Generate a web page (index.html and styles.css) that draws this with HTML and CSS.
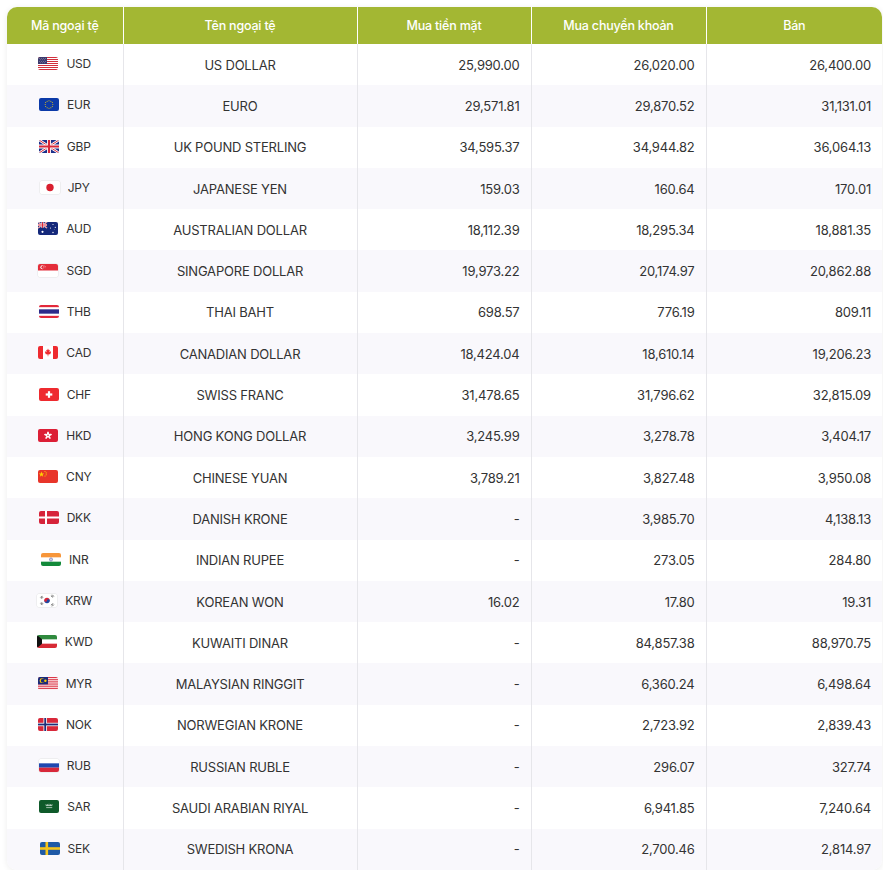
FILE: index.html
```html
<!DOCTYPE html>
<html lang="vi">
<head>
<meta charset="utf-8">
<title>Tỷ giá ngoại tệ</title>
<link rel="stylesheet" href="styles.css">
</head>
<body>
<div class="wrap">
<table class="rates">
<colgroup>
<col class="c1"><col class="c2"><col class="c3"><col class="c4"><col class="c5">
</colgroup>
<thead>
<tr><th>Mã ngoại tệ</th><th>Tên ngoại tệ</th><th>Mua tiền mặt</th><th>Mua chuyển khoản</th><th>Bán</th></tr>
</thead>
<tbody>
<tr><td class="code"><span class="cc"><span class="flag"><svg viewBox="0 0 20 13"><rect width="20" height="13" fill="#fff"/><g fill="#d22f3c"><rect y="0" width="20" height="1"/><rect y="2" width="20" height="1"/><rect y="4" width="20" height="1"/><rect y="6" width="20" height="1"/><rect y="8" width="20" height="1"/><rect y="10" width="20" height="1"/><rect y="12" width="20" height="1"/></g><rect width="9" height="7" fill="#3c3b6e"/><g fill="#fff" opacity=".8"><circle cx="1.5" cy="1.3" r=".35"/><circle cx="3.5" cy="1.3" r=".35"/><circle cx="5.5" cy="1.3" r=".35"/><circle cx="7.5" cy="1.3" r=".35"/><circle cx="2.5" cy="2.8" r=".35"/><circle cx="4.5" cy="2.8" r=".35"/><circle cx="6.5" cy="2.8" r=".35"/><circle cx="1.5" cy="4.3" r=".35"/><circle cx="3.5" cy="4.3" r=".35"/><circle cx="5.5" cy="4.3" r=".35"/><circle cx="7.5" cy="4.3" r=".35"/><circle cx="2.5" cy="5.8" r=".35"/><circle cx="4.5" cy="5.8" r=".35"/><circle cx="6.5" cy="5.8" r=".35"/></g></svg></span>USD</span></td><td class="name">US DOLLAR</td><td class="num">25,990.00</td><td class="num">26,020.00</td><td class="num">26,400.00</td></tr>
<tr><td class="code"><span class="cc"><span class="flag"><svg viewBox="0 0 20 13"><rect width="20" height="13" fill="#0b3aa8"/><g fill="#ffd200"><circle cx="10" cy="2.7" r=".5"/><circle cx="11.9" cy="3.2" r=".5"/><circle cx="13.3" cy="4.6" r=".5"/><circle cx="13.8" cy="6.5" r=".5"/><circle cx="13.3" cy="8.4" r=".5"/><circle cx="11.9" cy="9.8" r=".5"/><circle cx="10" cy="10.3" r=".5"/><circle cx="8.1" cy="9.8" r=".5"/><circle cx="6.7" cy="8.4" r=".5"/><circle cx="6.2" cy="6.5" r=".5"/><circle cx="6.7" cy="4.6" r=".5"/><circle cx="8.1" cy="3.2" r=".5"/></g></svg></span>EUR</span></td><td class="name">EURO</td><td class="num">29,571.81</td><td class="num">29,870.52</td><td class="num">31,131.01</td></tr>
<tr><td class="code"><span class="cc"><span class="flag"><svg viewBox="0 0 20 13"><rect width="20" height="13" fill="#1b2f8a"/><path d="M0 0L20 13M20 0L0 13" stroke="#fff" stroke-width="2.6"/><path d="M0 0L20 13M20 0L0 13" stroke="#d8283a" stroke-width="1"/><path d="M10 0V13M0 6.5H20" stroke="#fff" stroke-width="4"/><path d="M10 0V13M0 6.5H20" stroke="#d8283a" stroke-width="2.2"/></svg></span>GBP</span></td><td class="name">UK POUND STERLING</td><td class="num">34,595.37</td><td class="num">34,944.82</td><td class="num">36,064.13</td></tr>
<tr><td class="code"><span class="cc"><span class="flag light"><svg viewBox="0 0 20 13"><rect width="20" height="13" fill="#fff"/><circle cx="10" cy="6.5" r="3.7" fill="#d9202f"/></svg></span>JPY</span></td><td class="name">JAPANESE YEN</td><td class="num">159.03</td><td class="num">160.64</td><td class="num">170.01</td></tr>
<tr><td class="code"><span class="cc"><span class="flag"><svg viewBox="0 0 20 13"><rect width="20" height="13" fill="#14287a"/><path d="M0 0L9 6M9 0L0 6" stroke="#fff" stroke-width="1.4"/><path d="M0 0L9 6M9 0L0 6" stroke="#d8283a" stroke-width=".6"/><path d="M4.5 0V6M0 3H9" stroke="#fff" stroke-width="2"/><path d="M4.5 0V6M0 3H9" stroke="#d8283a" stroke-width="1"/><g fill="#fff"><circle cx="4.5" cy="9.8" r="1.1"/><circle cx="15" cy="2.5" r=".6"/><circle cx="12.5" cy="6" r=".6"/><circle cx="17.3" cy="5.3" r=".6"/><circle cx="15" cy="10.5" r=".7"/><circle cx="16.2" cy="7.5" r=".35"/></g></svg></span>AUD</span></td><td class="name">AUSTRALIAN DOLLAR</td><td class="num">18,112.39</td><td class="num">18,295.34</td><td class="num">18,881.35</td></tr>
<tr><td class="code"><span class="cc"><span class="flag light"><svg viewBox="0 0 20 13"><rect width="20" height="13" fill="#fff"/><rect width="20" height="6.5" fill="#e42d3a"/><circle cx="4.4" cy="3.25" r="2" fill="#fff"/><circle cx="5.2" cy="3.25" r="1.8" fill="#e42d3a"/><g fill="#fff"><circle cx="6.3" cy="1.9" r=".35"/><circle cx="7.3" cy="2.6" r=".35"/><circle cx="7" cy="3.8" r=".35"/><circle cx="5.7" cy="3.8" r=".35"/><circle cx="5.4" cy="2.6" r=".35"/></g></svg></span>SGD</span></td><td class="name">SINGAPORE DOLLAR</td><td class="num">19,973.22</td><td class="num">20,174.97</td><td class="num">20,862.88</td></tr>
<tr><td class="code"><span class="cc"><span class="flag"><svg viewBox="0 0 20 13"><rect width="20" height="13" fill="#e3283a"/><rect y="2.17" width="20" height="8.66" fill="#fff"/><rect y="4.33" width="20" height="4.34" fill="#2d2a8a"/></svg></span>THB</span></td><td class="name">THAI BAHT</td><td class="num">698.57</td><td class="num">776.19</td><td class="num">809.11</td></tr>
<tr><td class="code"><span class="cc"><span class="flag"><svg viewBox="0 0 20 13"><rect width="20" height="13" fill="#fff"/><rect width="5" height="13" fill="#ee2a2f"/><rect x="15" width="5" height="13" fill="#ee2a2f"/><path d="M10 2.6L10.8 4.2L11.8 3.8L11.4 6.2L12.8 5.2L13.2 6.1L12.3 7.4L12.8 8L10.3 8.4L10.3 10.2H9.7L9.7 8.4L7.2 8L7.7 7.4L6.8 6.1L7.2 5.2L8.6 6.2L8.2 3.8L9.2 4.2Z" fill="#ee2a2f"/></svg></span>CAD</span></td><td class="name">CANADIAN DOLLAR</td><td class="num">18,424.04</td><td class="num">18,610.14</td><td class="num">19,206.23</td></tr>
<tr><td class="code"><span class="cc"><span class="flag"><svg viewBox="0 0 20 13"><rect width="20" height="13" fill="#ee2a2f"/><rect x="8.9" y="3.2" width="2.2" height="6.6" fill="#fff"/><rect x="6.7" y="5.4" width="6.6" height="2.2" fill="#fff"/></svg></span>CHF</span></td><td class="name">SWISS FRANC</td><td class="num">31,478.65</td><td class="num">31,796.62</td><td class="num">32,815.09</td></tr>
<tr><td class="code"><span class="cc"><span class="flag"><svg viewBox="0 0 20 13"><rect width="20" height="13" fill="#dc1f36"/><g fill="#fff"><ellipse cx="10" cy="4.3" rx="1" ry="1.9"/><ellipse cx="10" cy="4.3" rx="1" ry="1.9" transform="rotate(72 10 6.5)"/><ellipse cx="10" cy="4.3" rx="1" ry="1.9" transform="rotate(144 10 6.5)"/><ellipse cx="10" cy="4.3" rx="1" ry="1.9" transform="rotate(216 10 6.5)"/><ellipse cx="10" cy="4.3" rx="1" ry="1.9" transform="rotate(288 10 6.5)"/></g><circle cx="10" cy="6.5" r=".6" fill="#dc1f36"/></svg></span>HKD</span></td><td class="name">HONG KONG DOLLAR</td><td class="num">3,245.99</td><td class="num">3,278.78</td><td class="num">3,404.17</td></tr>
<tr><td class="code"><span class="cc"><span class="flag"><svg viewBox="0 0 20 13"><rect width="20" height="13" fill="#e8352a"/><path d="M3.5 1.4L4.2 3.4L6.3 3.4L4.6 4.7L5.2 6.7L3.5 5.5L1.8 6.7L2.4 4.7L0.7 3.4L2.8 3.4Z" fill="#ffd400"/><g fill="#ffd400"><circle cx="7" cy="1.5" r=".55"/><circle cx="8.2" cy="2.9" r=".55"/><circle cx="8.2" cy="4.7" r=".55"/><circle cx="7" cy="6" r=".55"/></g></svg></span>CNY</span></td><td class="name">CHINESE YUAN</td><td class="num">3,789.21</td><td class="num">3,827.48</td><td class="num">3,950.08</td></tr>
<tr><td class="code"><span class="cc"><span class="flag"><svg viewBox="0 0 20 13"><rect width="20" height="13" fill="#d6243a"/><rect x="6" width="2" height="13" fill="#fff"/><rect y="5.5" width="20" height="2" fill="#fff"/></svg></span>DKK</span></td><td class="name">DANISH KRONE</td><td class="num">-</td><td class="num">3,985.70</td><td class="num">4,138.13</td></tr>
<tr><td class="code"><span class="cc"><span class="flag"><svg viewBox="0 0 20 13"><rect width="20" height="13" fill="#fff"/><rect width="20" height="4.33" fill="#f7963a"/><rect y="8.67" width="20" height="4.33" fill="#138a3a"/><circle cx="10" cy="6.5" r="1.5" fill="none" stroke="#1c2b8a" stroke-width=".5"/><circle cx="10" cy="6.5" r=".4" fill="#1c2b8a"/></svg></span>INR</span></td><td class="name">INDIAN RUPEE</td><td class="num">-</td><td class="num">273.05</td><td class="num">284.80</td></tr>
<tr><td class="code"><span class="cc"><span class="flag light"><svg viewBox="0 0 20 13"><rect width="20" height="13" fill="#fff"/><path d="M7.3 6.5A2.7 2.7 0 0 1 12.7 6.5Z" fill="#d6263a"/><path d="M7.3 6.5A2.7 2.7 0 0 0 12.7 6.5Z" fill="#1f47a0"/><circle cx="8.65" cy="6.5" r="1.35" fill="#d6263a"/><circle cx="11.35" cy="6.5" r="1.35" fill="#1f47a0"/><g stroke="#222" stroke-width=".55"><path d="M3.3 3.6L5 1.9M3.9 4.2L5.6 2.5M4.5 4.8L6.2 3.1"/><path d="M14 1.9L15.7 3.6M14.6 1.3L16.3 3M15.2 0.7L16.9 2.4"/><path d="M3.3 9.4L5 11.1M3.9 8.8L5.6 10.5M4.5 8.2L6.2 9.9"/><path d="M14 11.1L15.7 9.4M14.6 11.7L16.3 10M15.2 12.3L16.9 10.6"/></g></svg></span>KRW</span></td><td class="name">KOREAN WON</td><td class="num">16.02</td><td class="num">17.80</td><td class="num">19.31</td></tr>
<tr><td class="code"><span class="cc"><span class="flag"><svg viewBox="0 0 20 13"><rect width="20" height="13" fill="#fff"/><rect width="20" height="4.33" fill="#2f8a3e"/><rect y="8.67" width="20" height="4.33" fill="#d72a35"/><path d="M0 0L5 4.33V8.67L0 13Z" fill="#111"/></svg></span>KWD</span></td><td class="name">KUWAITI DINAR</td><td class="num">-</td><td class="num">84,857.38</td><td class="num">88,970.75</td></tr>
<tr><td class="code"><span class="cc"><span class="flag"><svg viewBox="0 0 20 13"><rect width="20" height="13" fill="#fff"/><g fill="#d8283a"><rect y="0" width="20" height=".93"/><rect y="1.86" width="20" height=".93"/><rect y="3.71" width="20" height=".93"/><rect y="5.57" width="20" height=".93"/><rect y="7.43" width="20" height=".93"/><rect y="9.29" width="20" height=".93"/><rect y="11.14" width="20" height=".93"/></g><rect width="10" height="7.4" fill="#1c2c7a"/><circle cx="4" cy="3.7" r="2.4" fill="#ffcc00"/><circle cx="4.8" cy="3.7" r="2" fill="#1c2c7a"/><circle cx="7.4" cy="3.7" r="1.2" fill="#ffcc00"/></svg></span>MYR</span></td><td class="name">MALAYSIAN RINGGIT</td><td class="num">-</td><td class="num">6,360.24</td><td class="num">6,498.64</td></tr>
<tr><td class="code"><span class="cc"><span class="flag"><svg viewBox="0 0 20 13"><rect width="20" height="13" fill="#d8283a"/><rect x="5.5" width="3.4" height="13" fill="#fff"/><rect y="4.8" width="20" height="3.4" fill="#fff"/><rect x="6.3" width="1.8" height="13" fill="#1f2d78"/><rect y="5.6" width="20" height="1.8" fill="#1f2d78"/></svg></span>NOK</span></td><td class="name">NORWEGIAN KRONE</td><td class="num">-</td><td class="num">2,723.92</td><td class="num">2,839.43</td></tr>
<tr><td class="code"><span class="cc"><span class="flag light"><svg viewBox="0 0 20 13"><rect width="20" height="13" fill="#fff"/><rect y="4.33" width="20" height="4.34" fill="#1f48b0"/><rect y="8.67" width="20" height="4.33" fill="#d8283a"/></svg></span>RUB</span></td><td class="name">RUSSIAN RUBLE</td><td class="num">-</td><td class="num">296.07</td><td class="num">327.74</td></tr>
<tr><td class="code"><span class="cc"><span class="flag"><svg viewBox="0 0 20 13"><rect width="20" height="13" fill="#0f5a2a"/><g stroke="#fff" stroke-width=".6" fill="none"><path d="M7 4.2V5.6H13V4.2M8.5 4.2V5.6M10 3.8V5.6M11.5 4.2V5.6"/><path d="M7.2 7.6H12.8L13.3 7.1"/></g></svg></span>SAR</span></td><td class="name">SAUDI ARABIAN RIYAL</td><td class="num">-</td><td class="num">6,941.85</td><td class="num">7,240.64</td></tr>
<tr><td class="code"><span class="cc"><span class="flag"><svg viewBox="0 0 20 13"><rect width="20" height="13" fill="#1f5aa6"/><rect x="5.5" width="2.6" height="13" fill="#f6c51c"/><rect y="5.2" width="20" height="2.6" fill="#f6c51c"/></svg></span>SEK</span></td><td class="name">SWEDISH KRONA</td><td class="num">-</td><td class="num">2,700.46</td><td class="num">2,814.97</td></tr>
</tbody>
</table>
</div>
</body>
</html>
```
FILE: styles.css
```css
* { box-sizing: border-box; }
html, body { margin: 0; padding: 0; background: #fff; }
body {
  font-family: Inter, "Noto Sans", "DejaVu Sans", sans-serif;
  color: #333;
}
.wrap {
  margin: 7px 0 0 7px;
  width: 875px;
  border-radius: 10px;
  overflow: hidden;
  box-shadow: 0 1px 6px rgba(0, 0, 0, 0.08);
}
.rates {
  width: 875px;
  border-collapse: collapse;
  table-layout: fixed;
  font-size: 13px;
}
.c1 { width: 116px; }
.c2 { width: 234px; }
.c3 { width: 174px; }
.c4 { width: 175px; }
.c5 { width: 176px; }
.rates thead th {
  background: #a3b733;
  color: #fff;
  font-weight: 500;
  font-size: 12.5px;
  height: 37px;
  padding: 0 8px;
  text-align: center;
  border-left: 1px solid #fff;
  letter-spacing: -0.2px;
}
.rates thead th:first-child { border-left: none; }
.rates tbody td {
  height: 41.3px;
  padding: 0 11px;
  border-left: 1px solid #e6e6ea;
  vertical-align: middle;
  letter-spacing: -0.2px;
}
.rates tbody td:first-child { border-left: none; }
.rates tbody tr:nth-child(even) td { background: #f9f8fc; }
.code { text-align: center; font-size: 12px; }
.cc { display: inline-flex; align-items: center; gap: 8px; }
.flag {
  display: inline-block;
  width: 20px;
  height: 13px;
  border-radius: 2px;
  overflow: hidden;
  line-height: 0;
}
.flag.light { box-shadow: 0 0 0 0.5px #e4e4e4; }
.flag svg { width: 20px; height: 13px; display: block; }
.name { text-align: center; }
.num { text-align: right; }
```
